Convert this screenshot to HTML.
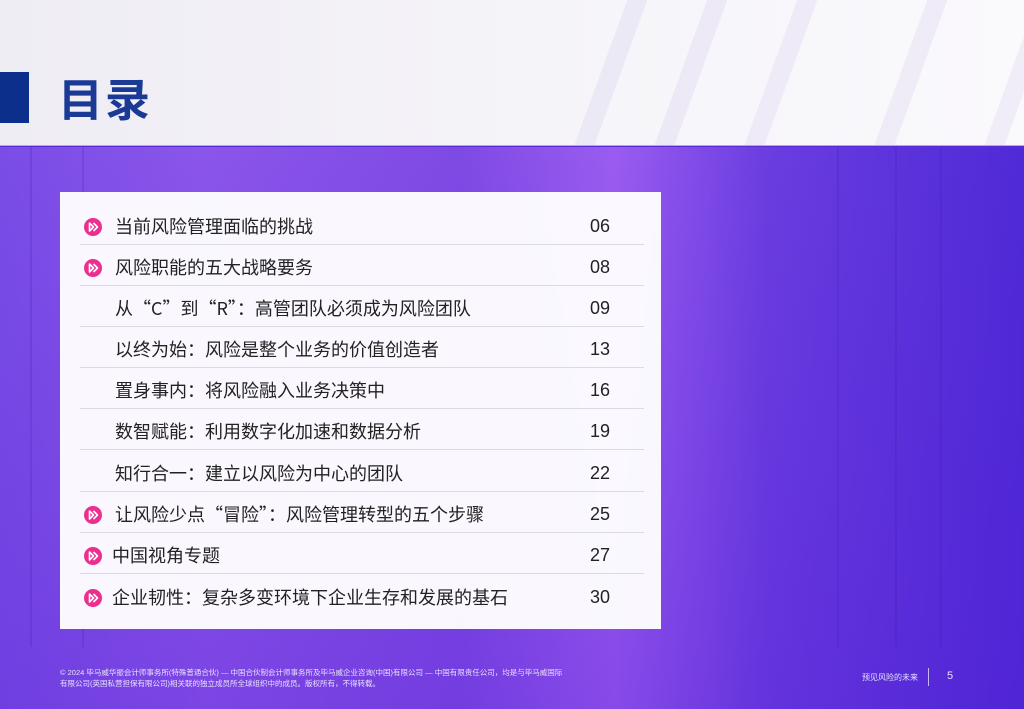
<!DOCTYPE html>
<html><head><meta charset="utf-8"><style>
*{margin:0;padding:0;box-sizing:border-box}
body{width:1024px;height:709px;overflow:hidden;position:relative;font-family:"Liberation Sans","Noto Sans CJK SC",sans-serif;background:#5a2ad8}
.top{position:absolute;left:0;top:0;width:1024px;height:146px;background:linear-gradient(90deg,#efedf4,#f6f5f9 60%,#faf9fc);overflow:hidden;border-bottom:1px solid #b9a5ee}
.stripe{position:absolute;top:-10px;width:20px;height:170px;background:rgba(200,185,235,.2);transform:skewX(-20deg)}
.bar{position:absolute;left:0;top:72px;width:29px;height:51px;background:#0c2f8c}
.title{position:absolute;left:58px;top:64px;font-size:45px;font-weight:bold;color:#1a3a95;letter-spacing:2px;font-family:"Noto Sans CJK SC",sans-serif}
.bg{position:absolute;left:0;top:147px;width:1024px;height:562px;background:
linear-gradient(180deg,rgba(0,0,0,0) 0%,rgba(80,20,210,.25) 100%),
linear-gradient(90deg,#7a4de6 0%,#8a55ea 20%,#7e4ae4 45%,#9a5cf0 60%,#6a3de0 75%,#4f2ad6 100%)}
.v{position:absolute;top:147px;width:2px;height:500px;background:rgba(60,20,170,.18)}
.card{position:absolute;left:60px;top:192px;width:601px;height:437px;background:rgba(255,255,255,.96)}
.row{position:absolute;left:20px;width:564px;height:41px;border-bottom:1px solid #dcdbe2;font-size:18px;color:#222;font-family:"Noto Sans CJK SC",sans-serif}
.row span.t{position:absolute;left:35px;top:9px}
.row span.n{position:absolute;right:34px;top:12px;font-family:"Liberation Sans",sans-serif;font-size:18px}
.ic{position:absolute;left:4px;top:14px;width:18px;height:18px;border-radius:50%;background:#ea2f8f}
.ic svg{position:absolute;left:0;top:0}
.foot{position:absolute;left:60px;top:667px;font-size:7.5px;color:#e8e0ff;line-height:11px}
.fr{position:absolute;left:862px;top:672px;font-size:8px;color:#e8e0ff}
.fl{position:absolute;left:928px;top:668px;width:1px;height:18px;background:#c8b8ff}
.pg{position:absolute;left:947px;top:670px;font-size:11px;color:#e8e0ff}
</style></head><body>
<div class="top">
<div class="stripe" style="left:600px"></div><div class="stripe" style="left:680px"></div><div class="stripe" style="left:770px"></div><div class="stripe" style="left:900px"></div><div class="stripe" style="left:1010px"></div>
</div>
<div class="bar"></div>
<div class="title">目录</div>
<div class="bg"></div>
<div class="v" style="left:30px"></div><div class="v" style="left:82px"></div><div class="v" style="left:837px"></div><div class="v" style="left:895px"></div><div class="v" style="left:940px"></div>
<div class="card">
<div class="row" style="top:12px"><div class="ic"><svg width="18" height="18" viewBox="0 0 18 18" fill="none" stroke="#fff" stroke-width="1.6" stroke-linejoin="round"><path d="M5.5 5l4 4-4 4zM9.5 5l4 4-4 4"/></svg></div><span class="t">当前风险管理面临的挑战</span><span class="n">06</span></div>
<div class="row" style="top:53px"><div class="ic"><svg width="18" height="18" viewBox="0 0 18 18" fill="none" stroke="#fff" stroke-width="1.6" stroke-linejoin="round"><path d="M5.5 5l4 4-4 4zM9.5 5l4 4-4 4"/></svg></div><span class="t">风险职能的五大战略要务</span><span class="n">08</span></div>
<div class="row" style="top:94px"><span class="t">从“C”到“R”：高管团队必须成为风险团队</span><span class="n">09</span></div>
<div class="row" style="top:135px"><span class="t">以终为始：风险是整个业务的价值创造者</span><span class="n">13</span></div>
<div class="row" style="top:176px"><span class="t">置身事内：将风险融入业务决策中</span><span class="n">16</span></div>
<div class="row" style="top:217px"><span class="t">数智赋能：利用数字化加速和数据分析</span><span class="n">19</span></div>
<div class="row" style="top:259px"><span class="t">知行合一：建立以风险为中心的团队</span><span class="n">22</span></div>
<div class="row" style="top:300px"><div class="ic"><svg width="18" height="18" viewBox="0 0 18 18" fill="none" stroke="#fff" stroke-width="1.6" stroke-linejoin="round"><path d="M5.5 5l4 4-4 4zM9.5 5l4 4-4 4"/></svg></div><span class="t">让风险少点“冒险”：风险管理转型的五个步骤</span><span class="n">25</span></div>
<div class="row" style="top:341px"><div class="ic"><svg width="18" height="18" viewBox="0 0 18 18" fill="none" stroke="#fff" stroke-width="1.6" stroke-linejoin="round"><path d="M5.5 5l4 4-4 4zM9.5 5l4 4-4 4"/></svg></div><span class="t" style="left:32px">中国视角专题</span><span class="n">27</span></div>
<div class="row" style="top:383px;border-bottom:none"><div class="ic"><svg width="18" height="18" viewBox="0 0 18 18" fill="none" stroke="#fff" stroke-width="1.6" stroke-linejoin="round"><path d="M5.5 5l4 4-4 4zM9.5 5l4 4-4 4"/></svg></div><span class="t" style="left:32px">企业韧性：复杂多变环境下企业生存和发展的基石</span><span class="n">30</span></div>
</div>
<div class="foot">© 2024 毕马威华振会计师事务所(特殊普通合伙) — 中国合伙制会计师事务所及毕马威企业咨询(中国)有限公司 — 中国有限责任公司，均是与毕马威国际<br>有限公司(英国私营担保有限公司)相关联的独立成员所全球组织中的成员。版权所有，不得转载。</div>
<div class="fr">预见风险的未来</div>
<div class="fl"></div>
<div class="pg">5</div>
</body></html>
